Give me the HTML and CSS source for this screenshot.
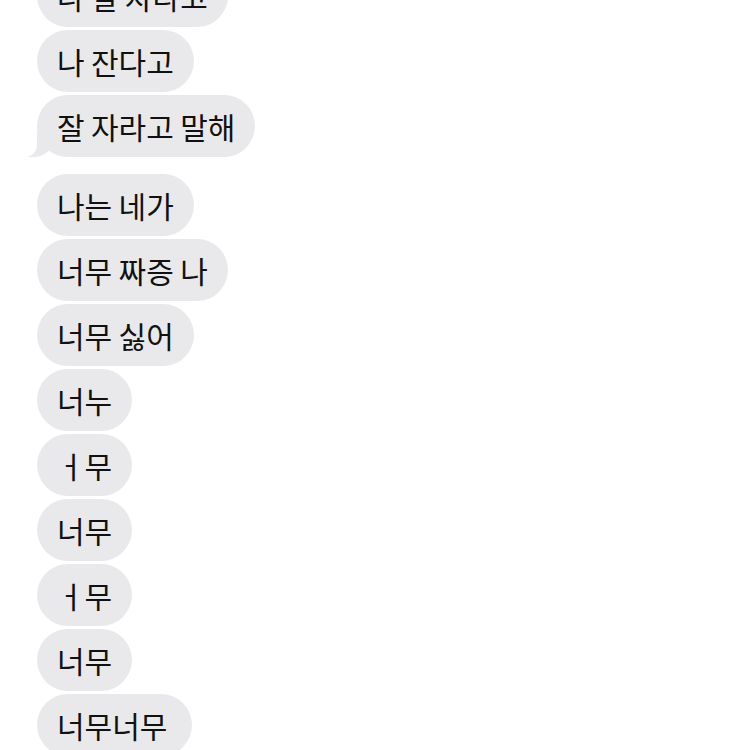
FILE: index.html
```html
<!DOCTYPE html>
<html lang="ko">
<head>
<meta charset="utf-8">
<link rel="stylesheet" href="styles.css">
</head>
<body>
<div class="thread">
  <div class="group">
    <div class="bubble">나 잘 자라고</div>
    <div class="bubble">나 잔다고</div>
    <div class="bubble tail">잘 자라고 말해</div>
  </div>
  <div class="group">
    <div class="bubble">나는 네가</div>
    <div class="bubble">너무 짜증 나</div>
    <div class="bubble">너무 싫어</div>
    <div class="bubble">너누</div>
    <div class="bubble">ㅓ무</div>
    <div class="bubble">너무</div>
    <div class="bubble">ㅓ무</div>
    <div class="bubble">너무</div>
    <div class="bubble wide">너무너무</div>
  </div>
</div>
</body>
</html>
```
FILE: styles.css
```css
html, body {
  margin: 0;
  padding: 0;
  background: #ffffff;
  overflow: hidden;
}
body {
  width: 750px;
  height: 750px;
  font-family: "Noto Sans CJK KR", "Noto Sans", sans-serif;
}
.thread {
  display: flex;
  flex-direction: column;
  gap: 17px;
  margin-top: -35px;
  padding-left: 37px;
}
.group {
  display: flex;
  flex-direction: column;
  align-items: flex-start;
  gap: 3px;
}
.bubble {
  position: relative;
  box-sizing: border-box;
  height: 62px;
  padding: 0 20px 0 20px;
  display: flex;
  align-items: center;
  background: #e9e9eb;
  border-radius: 31px;
  font-size: 30px;
  word-spacing: -2px;
  color: #111;
  white-space: pre;
  line-height: 1;
}
.wide {
  padding-right: 25px;
}
.tail::before {
  content: "";
  position: absolute;
  z-index: 0;
  bottom: 0;
  left: -9px;
  width: 26px;
  height: 26px;
  background: #e9e9eb;
  border-bottom-right-radius: 20px;
}
.tail::after {
  content: "";
  position: absolute;
  z-index: 1;
  bottom: 0;
  left: -12px;
  width: 12px;
  height: 26px;
  background: #ffffff;
  border-bottom-right-radius: 12px;
}
```
